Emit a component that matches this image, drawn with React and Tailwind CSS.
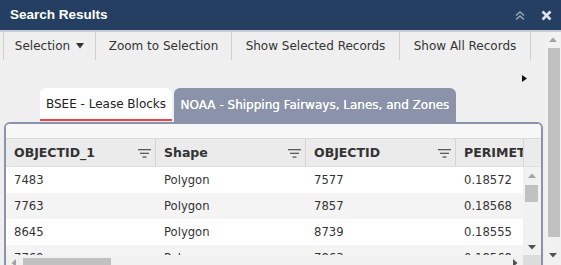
const UpArrow = ({ color = "#a3a3a3" }) => (
  <svg width="8" height="5" viewBox="0 0 8 5"><polygon points="0,5 4,0.5 8,5" fill={color} /></svg>
);
const DownArrow = ({ color = "#505050" }) => (
  <svg width="8" height="5" viewBox="0 0 8 5"><polygon points="0,0 8,0 4,4.5" fill={color} /></svg>
);
const LeftArrow = ({ color = "#a3a3a3" }) => (
  <svg width="5" height="8" viewBox="0 0 5 8"><polygon points="5,0 5,8 0.5,4" fill={color} /></svg>
);
const RightArrow = ({ color = "#505050" }) => (
  <svg width="5" height="8" viewBox="0 0 5 8"><polygon points="0,0 0,8 4.5,4" fill={color} /></svg>
);

const FilterIcon = () => (
  <svg width="13" height="9" viewBox="0 0 13 9">
    <rect x="0" y="0" width="13" height="1.3" fill="#5a5a5a" />
    <rect x="2" y="3.7" width="9" height="1.3" fill="#5a5a5a" />
    <rect x="4.5" y="7.4" width="4" height="1.3" fill="#5a5a5a" />
  </svg>
);

const headers = ["OBJECTID_1", "Shape", "OBJECTID", "PERIMETER"];
const rows = [
  ["7483", "Polygon", "7577", "0.18572"],
  ["7763", "Polygon", "7857", "0.18568"],
  ["8645", "Polygon", "8739", "0.18555"],
  ["7769", "Polygon", "7863", "0.18568"],
];

export default function App() {
  return (
    <div className="w-[561px] h-[265px] overflow-hidden flex flex-col bg-[#efefef] font-['DejaVu_Sans',Verdana,sans-serif] text-[#333]">
      {/* Title bar */}
      <div className="h-[30px] shrink-0 bg-[#243f62] flex items-center pl-[10px] pr-[9px]">
        <span className="font-['Liberation_Sans',Arial,sans-serif] font-bold text-[13.5px] text-white leading-none">
          Search Results
        </span>
        <div className="ml-auto flex items-center gap-[16px]">
          <svg width="10" height="9" viewBox="0 0 10 9">
            <path d="M1 4.5 L5 1 L9 4.5 M1 8.5 L5 5 L9 8.5" stroke="#8fa3ba" strokeWidth="1.6" fill="none" />
          </svg>
          <svg width="11" height="11" viewBox="0 0 11 11">
            <path d="M1.5 1.5 L9.5 9.5 M9.5 1.5 L1.5 9.5" stroke="#dfe3e8" strokeWidth="2.6" />
          </svg>
        </div>
      </div>

      {/* Body */}
      <div className="flex-1 min-h-0 flex border-t-2 border-[#c5cbd4]">
        <div className="w-[545px] shrink-0 flex flex-col min-h-0">
          {/* Toolbar */}
          <div className="h-[28px] shrink-0 flex pl-[3px] text-[12px] text-[#333]">
            <div className="w-[93px] flex items-center justify-center gap-[6px] border-l border-r border-[#d0d0d0]">
              <span>Selection</span>
              <svg width="8" height="6" viewBox="0 0 8 6"><polygon points="0,0 8,0 4,5.5" fill="#333" /></svg>
            </div>
            <div className="w-[136px] flex items-center justify-center border-r border-[#d0d0d0]">Zoom to Selection</div>
            <div className="w-[168px] flex items-center justify-center border-r border-[#d0d0d0]">Show Selected Records</div>
            <div className="w-[131px] flex items-center justify-center border-r border-[#d0d0d0]">Show All Records</div>
          </div>

          {/* Spacer with arrow */}
          <div className="h-[28px] shrink-0 flex justify-end items-start pt-[15px] pr-[18px]">
            <svg width="5" height="7" viewBox="0 0 5 7"><polygon points="0,0 0,7 5,3.5" fill="#111" /></svg>
          </div>

          {/* Tabs */}
          <div className="h-[34px] shrink-0 flex items-start pl-[40px] gap-[2px] text-[12px]">
            <div className="h-[33px] w-[132px] bg-white rounded-t-[6px] border-b-2 border-[#e8434a] flex items-center justify-center text-[#222]">
              BSEE - Lease Blocks
            </div>
            <div className="h-[34px] w-[282px] bg-[#8a93aa] rounded-t-[6px] flex items-center justify-center text-white pb-[1px] [text-shadow:0_0_0.4px_#fff]">
              NOAA - Shipping Fairways, Lanes, and Zones
            </div>
          </div>

          {/* Panel */}
          <div className="ml-[4px] w-[539px] flex-1 min-h-0 border-2 border-b-0 border-[#8a93aa] rounded-tl-[6px] rounded-tr-[6px] bg-white flex flex-col overflow-hidden">
            <div className="h-[15px] shrink-0 bg-[#f7f7f7] border-b border-[#d9d9d9]" />
            {/* Header */}
            <div className="h-[28px] shrink-0 flex bg-[#ebebeb] border-b border-[#dedede]">
              <div className="w-[517px] flex overflow-hidden">
                {headers.map((h) => (
                  <div key={h} className="w-[150px] shrink-0 flex items-center pl-[8px] pr-[4px] pt-[2px] border-r border-[#d4d4d4] text-[12.5px] font-bold text-[#333]">
                    <span className="whitespace-nowrap">{h}</span>
                    <span className="ml-auto shrink-0 flex"><FilterIcon /></span>
                  </div>
                ))}
              </div>
              <div className="w-[18px] border-l border-[#d4d4d4]" />
            </div>
            {/* Rows + vscroll */}
            <div className="h-[88px] shrink-0 flex">
              <div className="w-[517px] overflow-hidden">
                {rows.map((r, i) => (
                  <div key={i} className={`h-[26px] flex ${i % 2 === 1 ? "bg-[#f4f4f4]" : "bg-white"}`}>
                    {r.map((c, j) => (
                      <div key={j} className="w-[150px] shrink-0 flex items-center pl-[8px] pt-[2px] text-[11.6px] text-[#333] whitespace-nowrap">
                        {c}
                      </div>
                    ))}
                  </div>
                ))}
              </div>
              <div className="w-[18px] bg-[#f1f1f1] flex flex-col">
                <div className="h-[16px] flex items-center justify-center"><UpArrow /></div>
                <div className="h-[17px] mt-[2px] ml-[2px] mr-[3px] bg-[#c1c1c1]" />
                <div className="flex-1" />
                <div className="h-[16px] flex items-center justify-center"><DownArrow /></div>
              </div>
            </div>
            {/* hscroll */}
            <div className="h-[16px] shrink-0 flex">
              <div className="w-[517px] flex bg-[#f1f1f1]">
                <div className="w-[14px] flex items-center justify-center"><LeftArrow /></div>
                <div className="w-[88px] h-[10px] mt-[3px] ml-[3px] bg-[#c1c1c1]" />
                <div className="flex-1" />
                <div className="w-[16px] flex items-center justify-center"><RightArrow /></div>
              </div>
              <div className="w-[18px] bg-[#dcdcdc]" />
            </div>
          </div>
        </div>

        {/* Page scrollbar */}
        <div className="w-[16px] shrink-0 bg-[#f1f1f1] flex flex-col">
          <div className="h-[15px] flex items-center justify-center"><UpArrow /></div>
          <div className="h-[189px] mt-[1px] ml-[3px] mr-[1px] bg-[#c1c1c1]" />
          <div className="h-[10px]" />
          <div className="h-[16px] flex items-center justify-center"><DownArrow /></div>
        </div>
      </div>
    </div>
  );
}
